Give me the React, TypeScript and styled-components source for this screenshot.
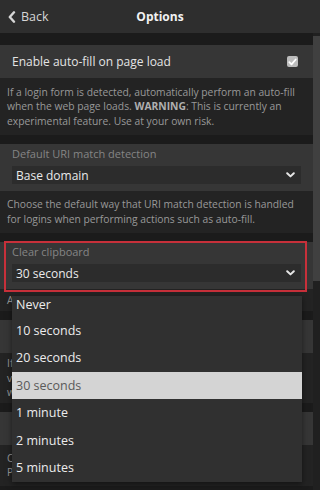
import React from "react";
import styled, { createGlobalStyle } from "styled-components";

const Global = createGlobalStyle`
  html, body { margin: 0; padding: 0; background: #1b1b1b; overflow: hidden; }
  body { font-family: "Open Sans", "Liberation Sans", sans-serif; }
  * { box-sizing: border-box; }
`;

const Frame = styled.div`
  position: relative;
  width: 320px;
  height: 490px;
  display: flex;
  flex-direction: column;
  overflow: hidden;
  background: #1b1b1b;
`;

const Header = styled.header`
  height: 33px;
  flex: none;
  background: #2e2e2e;
  display: grid;
  grid-template-columns: 1fr auto 1fr;
  align-items: center;
  padding: 0 8px;
`;

const BackLink = styled.a`
  display: flex;
  align-items: center;
  gap: 5px;
  color: #d6d6d6;
  font-size: 12.5px;
  text-decoration: none;
`;

const Title = styled.h1`
  margin: 0;
  font-size: 12px;
  font-weight: 700;
  color: #f2f2f2;
`;

const Body = styled.div`
  flex: 1;
  display: flex;
  min-height: 0;
`;

const Content = styled.main`
  flex: 1;
  padding-top: 12px;
  display: flex;
  flex-direction: column;
  gap: 9px;
`;

const Track = styled.div`
  width: 7px;
  flex: none;
  background: #202020;
  padding-top: 3px;
`;

const Thumb = styled.div`
  height: 245px;
  background: #404040;
`;

const Section = styled.section`
  display: flex;
  flex-direction: column;
`;

const Box = styled.div`
  position: relative;
  background: #363636;
`;

const ToggleRow = styled.label`
  height: 33px;
  display: flex;
  align-items: center;
  justify-content: space-between;
  padding: 0 15px 0 12px;
  font-size: 12px;
  color: #e4e4e4;
`;

const Check = styled.span`
  width: 11px;
  height: 11px;
  border-radius: 2px;
  background: #bcbcbc;
  display: flex;
  align-items: center;
  justify-content: center;
`;

const SelectField = styled.div`
  padding: 3px 12px 7px 12px;
  display: flex;
  flex-direction: column;
  gap: 5px;
`;

const FieldLabel = styled.span`
  font-size: 11px;
  line-height: 14px;
  color: #858585;
`;

const SelectBox = styled.div`
  height: 18px;
  background: #2c2c2c;
  display: flex;
  align-items: center;
  justify-content: space-between;
  padding: 1px 6px 0 4px;
  font-size: 12px;
  color: #eaeaea;
`;

const Highlight = styled.div`
  position: absolute;
  top: -1px;
  left: 4px;
  right: 6px;
  bottom: -3px;
  border: 2px solid #c7303a;
  pointer-events: none;
`;

const Help = styled.p<{ $pad?: number }>`
  margin: 0;
  background: #232323;
  color: #999999;
  font-size: 10.3px;
  line-height: 14.5px;
  padding: ${(p) => p.$pad ?? 6.5}px 14px ${(p) => p.$pad ?? 6.5}px 7px;
  b { color: #b0b0b0; font-weight: 700; }
`;

const Menu = styled.ul`
  position: absolute;
  top: 296px;
  left: 12px;
  width: 290px;
  margin: 0;
  padding: 0;
  list-style: none;
  background: #303030;
  box-shadow: 0 2px 6px rgba(0, 0, 0, 0.5);
`;

const Option = styled.li<{ $active?: boolean }>`
  height: 27.5px;
  display: flex;
  align-items: center;
  padding-left: 4px;
  font-size: 12.5px;
  color: ${(p) => (p.$active ? "#5a5a5a" : "#ececec")};
  background: ${(p) => (p.$active ? "#d4d4d4" : "transparent")};
  &:first-child {
    height: 20.5px;
    align-items: flex-start;
  }
`;

const Chevron = () => (
  <svg width="9" height="6" viewBox="0 0 9 6">
    <path d="M1.2 1.2 L4.5 4.4 L7.8 1.2" fill="none" stroke="#e6e6e6" strokeWidth="2" strokeLinecap="round" strokeLinejoin="round" />
  </svg>
);

const options = ["Never", "10 seconds", "20 seconds", "30 seconds", "1 minute", "2 minutes", "5 minutes"];

export default function App() {
  return (
    <>
      <Global />
      <Frame>
        <Header>
          <BackLink>
            <svg width="8" height="12" viewBox="0 0 8 12">
              <path d="M6 1.3 L1.8 6 L6 10.7" fill="none" stroke="#d6d6d6" strokeWidth="2.4" strokeLinecap="round" strokeLinejoin="round" />
            </svg>
            Back
          </BackLink>
          <Title>Options</Title>
          <span />
        </Header>
        <Body>
          <Content>
            <Section>
              <Box>
                <ToggleRow>
                  Enable auto-fill on page load
                  <Check>
                    <svg width="9" height="8" viewBox="0 0 9 8">
                      <path d="M1.3 4.2 L3.5 6.3 L7.7 1.5" fill="none" stroke="#ffffff" strokeWidth="1.8" strokeLinecap="round" strokeLinejoin="round" />
                    </svg>
                  </Check>
                </ToggleRow>
              </Box>
              <Help>
                If a login form is detected, automatically perform an auto-fill when the web page loads. <b>WARNING</b>: This is currently an experimental feature. Use at your own risk.
              </Help>
            </Section>
            <Section>
              <Box>
                <SelectField>
                  <FieldLabel>Default URI match detection</FieldLabel>
                  <SelectBox>
                    Base domain
                    <Chevron />
                  </SelectBox>
                </SelectField>
              </Box>
              <Help>
                Choose the default way that URI match detection is handled for logins when performing actions such as auto-fill.
              </Help>
            </Section>
            <Section>
              <Box>
                <SelectField>
                  <FieldLabel>Clear clipboard</FieldLabel>
                  <SelectBox>
                    30 seconds
                    <Chevron />
                  </SelectBox>
                </SelectField>
                <Highlight />
              </Box>
              <Help $pad={4}>Automatically clear copied values from your clipboard.</Help>
            </Section>
            <Section>
              <Box>
                <ToggleRow>Disable add login notification</ToggleRow>
              </Box>
              <Help $pad={3}>
                If enabled, a notification bar asks to save new logins to your
                <br />
                vault after you log in to a website for the first time, so
                <br />
                we recommend leaving it on.
              </Help>
            </Section>
            <Section>
              <Box>
                <ToggleRow>Disable changed password notification</ToggleRow>
              </Box>
              <Help $pad={6}>
                Changed password notification asks to update a login's
                <br />
                Password when a change is detected on a website.
              </Help>
            </Section>
          </Content>
          <Track>
            <Thumb />
          </Track>
        </Body>
        <Menu>
          {options.map((o) => (
            <Option key={o} $active={o === "30 seconds"}>
              {o}
            </Option>
          ))}
        </Menu>
      </Frame>
    </>
  );
}
